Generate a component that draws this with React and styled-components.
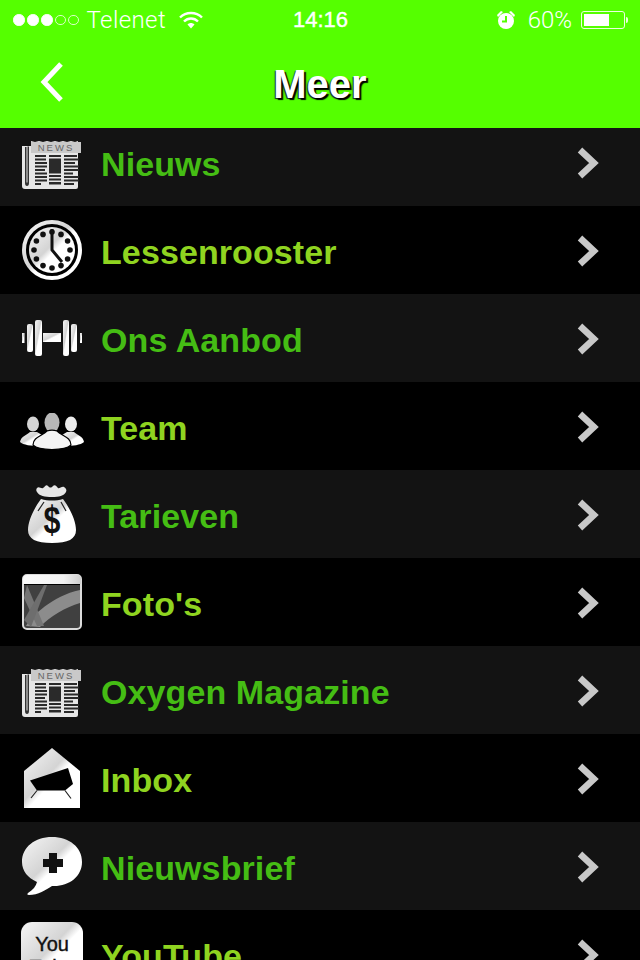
import React from "react";
import styled, { createGlobalStyle } from "styled-components";

const GlobalStyle = createGlobalStyle`
  html, body {
    margin: 0;
    padding: 0;
    background: #000;
    font-family: "Liberation Sans", Arial, sans-serif;
  }
`;

/*** icons ***/
const Gloss = ({ id }) => (
  <defs>
    <linearGradient id={id} x1="0" y1="0" x2="1" y2="1">
      <stop offset="0" stopColor="#f6f6f6" />
      <stop offset="0.44" stopColor="#d4d4d4" />
      <stop offset="0.54" stopColor="#ffffff" />
      <stop offset="1" stopColor="#ffffff" />
    </linearGradient>
  </defs>
);

const NewsIcon = () => (
  <svg width="60" height="48" viewBox="0 0 60 48">
    <path d="M9 0l4 1 4-1 4 1 4-1 4 1 4-1 4 1 4-1 4 1 4-1 4 1 3-1v46a2 2 0 0 1-2 2H3a3 3 0 0 1-3-3V5h9z" fill="#e6e6e6" />
    <path d="M3 6v36q0 3 2 3t2-3V5.500H5.500v36h-1V6z" fill="#333" />
    <path d="M9 1h50v11H9z" fill="#c9c9c9" />
    <text x="34" y="10" textAnchor="middle" fontFamily="Liberation Sans" fontSize="9.500" letterSpacing="2" fill="#666">NEWS</text>
    <g fill="#2a2a2a">
      <path d="M13 14h11v2H13zM13 17.500h11v2H13zM13 21h12v2H13zM13 24.500h12v2H13zM13 28h10v2H13zM13 31.500h12v2H13zM13 35h12v2H13zM13 38.500h12v2H13zM13 42h6v2H13z" />
      <path d="M27 14h12v2H27zM27 17.500h12v15H27zM27 34h12v2H27zM27 37.500h12v2H27zM27 41h12v2.500H27z" />
      <path d="M42 14h13v2H42zM42 17.500h15v2H42zM42 21h11v2H42zM42 24.500h15v2H42zM42 28h15v2H42zM42 31.500h9v2H42zM42 35h15v2H42zM42 38.500h15v2H42zM42 42h10v2H42z" />
    </g>
  </svg>
);

const ClockIcon = ({ id }) => {
  const dots = [0, 1, 2, 3, 4, 5, 6, 7, 8, 9, 10, 11];
  return (
    <svg width="60" height="60" viewBox="0 0 60 60">
      <Gloss id={id} />
      <circle cx="30" cy="30" r="28" fill="none" stroke={`url(#${id})`} strokeWidth="4" />
      <circle cx="30" cy="30" r="23" fill={`url(#${id})`} />
      {dots.map(d => (
        <circle
          key={d}
          cx={30 + 18 * Math.sin((d * Math.PI) / 6)}
          cy={30 - 18 * Math.cos((d * Math.PI) / 6)}
          r="2.800"
          fill="#111"
        />
      ))}
      <path d="M30 9v21l10 12" fill="none" stroke="#111" strokeWidth="3" />
    </svg>
  );
};

const DumbbellIcon = ({ id }) => (
  <svg width="60" height="36" viewBox="0 0 60 36">
    <Gloss id={id} />
    <g fill={`url(#${id})`}>
      <rect x="0" y="13" width="2.500" height="10" />
      <rect x="5" y="4" width="6" height="28" rx="2" />
      <rect x="13" y="0" width="7" height="36" rx="2" />
      <rect x="21" y="13" width="18" height="9" />
      <rect x="41" y="0" width="6" height="36" rx="2" />
      <rect x="49" y="4" width="6" height="28" rx="2" />
      <rect x="58" y="13" width="2" height="10" />
    </g>
  </svg>
);

const TeamIcon = ({ id }) => (
  <svg width="64" height="37" viewBox="0 0 64 37">
    <Gloss id={id} />
    <ellipse cx="13" cy="11" rx="6" ry="7.500" fill="#d4d4d4" />
    <path d="M0 29c1-6 7-7 10-10h7l5 3-4 11c-6 0-15-1-18-4z" fill={`url(#${id})`} />
    <ellipse cx="51" cy="11" rx="6" ry="7.500" fill="#ececec" />
    <path d="M64 29c-1-6-7-7-10-10h-7l-5 3 4 11c6 0 15-1 18-4z" fill={`url(#${id})`} />
    <ellipse cx="32" cy="9.500" rx="7.500" ry="10" fill="#b8b8b8" />
    <path d="M13 32c0-8 9-9 14-14 3-1 7-1 10 0 5 5 14 6 14 14-6 6-32 6-38 0z" fill="#f4f4f4" stroke="#000" strokeWidth="1.200" />
  </svg>
);

const MoneyIcon = ({ id }) => (
  <svg width="50" height="60" viewBox="0 0 50 60">
    <Gloss id={id} />
    <path d="M10 4c2-2 4 1 6 0s3-4 5-2 3 2 5 0 4 1 5 2 4-2 6-1 3 3 2 5c-2 4-7 5-14 5s-13-1-15-5c-1-1-1-3 0-4z" fill="#e6e6e6" />
    <path d="M14 15c7 2 15 2 22 0 6 8 13 21 13 31 0 9-8 13-24 13S1 55 1 46c0-10 7-23 13-31z" fill={`url(#${id})`} />
    <path d="M11 27l6-9M39 27l-5-9" stroke="#222" strokeWidth="1.200" fill="none" />
    <text transform="translate(25 49) scale(0.8 1)" textAnchor="middle" fontFamily="Liberation Sans" fontWeight="700" fontSize="38" fill="#111">$</text>
  </svg>
);

const PhotoIcon = ({ id }) => (
  <svg width="60" height="56" viewBox="0 0 60 56">
    <defs>
      <linearGradient id={id} x1="0" y1="0" x2="1" y2="0">
        <stop offset="0" stopColor="#fafafa" />
        <stop offset="0.7" stopColor="#f2f2f2" />
        <stop offset="1" stopColor="#cfcfcf" />
      </linearGradient>
    </defs>
    <rect x="1" y="1" width="58" height="54" rx="4" fill="#404040" stroke="#dcdcdc" strokeWidth="2" />
    <path d="M1 10V5a4 4 0 0 1 4-4h50a4 4 0 0 1 4 4v5z" fill={`url(#${id})`} />
    <path d="M2 10h56v1H2z" fill="#000" />
    <path d="M4 52c6-10 26-30 54-36v13C44 33 28 42 18 53z" fill="#8c8c8c" />
    <path d="M5 11l17 41h-7L2 24z" fill="#757575" />
    <path d="M2 46L22 11h3L9 53z" fill="#6e6e6e" />
  </svg>
);

const MailIcon = ({ id }) => (
  <svg width="56" height="60" viewBox="0 0 56 60">
    <Gloss id={id} />
    <path d="M28 0l28 23v37H0V23z" fill={`url(#${id})`} />
    <path d="M6 32.500L44 20l5 16-8 6.500H13z" fill="#000" />
    <path d="M13 42.500L7 50M41 42.500l6 8" stroke="#222" strokeWidth="1.200" fill="none" />
  </svg>
);

const BubbleIcon = ({ id }) => (
  <svg width="60" height="58" viewBox="0 0 60 58">
    <Gloss id={id} />
    <path d="M30 0c17 0 30 10 30 25S46 50 30 49c-6 4-14 9-23 9-2 0-2-1-1-2 5-3 8-7 9-11C6 41 0 34 0 25 0 10 13 0 30 0z" fill={`url(#${id})`} />
    <path d="M27 16h8v6h6v8h-6v6h-8v-6h-6v-8h6z" fill="#111" />
  </svg>
);

const YouTubeIcon = ({ id }) => (
  <svg width="62" height="64" viewBox="0 0 62 64">
    <Gloss id={id} />
    <rect x="0" y="0" width="62" height="64" rx="11" fill={`url(#${id})`} />
    <text x="31" y="29" textAnchor="middle" fontFamily="Liberation Sans" fontSize="20" stroke="#111" strokeWidth="0.400" fill="#111">You</text>
    <text x="31" y="52" textAnchor="middle" fontFamily="Liberation Sans" fontSize="20" stroke="#111" strokeWidth="0.400" fill="#111">Tube</text>
  </svg>
);

const Chevron = () => (
  <ChevronSvg width="24" height="32" viewBox="0 0 24 32">
    <path d="M4 3l14 13L4 29" fill="none" stroke="#c8c8c8" strokeWidth="6.500" />
  </ChevronSvg>
);

const BackChevron = () => (
  <svg width="24" height="40" viewBox="0 0 24 40">
    <path d="M21 2L4 20l17 18" fill="none" stroke="#fff" strokeWidth="5" />
  </svg>
);

const WifiIcon = () => (
  <svg width="24" height="18" viewBox="0 0 24 18">
    <g fill="none" stroke="#fff" strokeWidth="2.400">
      <path d="M1 6.500c6-6 16-6 22 0" />
      <path d="M5 10.500c4-4 10-4 14 0" />
    </g>
    <path d="M8.500 13.500c2-2 5-2 7 0L12 17.500z" fill="#fff" />
  </svg>
);

const AlarmIcon = () => (
  <svg width="20" height="20" viewBox="0 0 20 20">
    <path d="M1 5l4-4 2 1-5 5zM19 5l-4-4-2 1 5 5z" fill="#fff" />
    <circle cx="10" cy="11" r="8" fill="#fff" />
    <path d="M10 6v5.500H6" fill="none" stroke="#55ff00" strokeWidth="2" />
  </svg>
);

/*** data ***/
const items = [
  { label: "Nieuws", Icon: NewsIcon, shift: 5 },
  { label: "Lessenrooster", Icon: ClockIcon, shift: 0 },
  { label: "Ons Aanbod", Icon: DumbbellIcon, shift: 0 },
  { label: "Team", Icon: TeamIcon, shift: 10 },
  { label: "Tarieven", Icon: MoneyIcon, shift: 0 },
  { label: "Foto's", Icon: PhotoIcon, shift: 0 },
  { label: "Oxygen Magazine", Icon: NewsIcon, shift: 5 },
  { label: "Inbox", Icon: MailIcon, shift: 0 },
  { label: "Nieuwsbrief", Icon: BubbleIcon, shift: 0 },
  { label: "YouTube", Icon: YouTubeIcon, shift: 0 }
];

export default function App() {
  return (
    <Page>
      <GlobalStyle />
      <Header>
        <StatusBar>
          <StatusLeft>
            <Signal>
              {[1, 1, 1, 0, 0].map((on, i) => (
                <SignalDot key={i} $on={on} />
              ))}
            </Signal>
            <Carrier>Telenet</Carrier>
            <WifiIcon />
          </StatusLeft>
          <StatusTime>14:16</StatusTime>
          <StatusRight>
            <AlarmIcon />
            <BatteryText>60%</BatteryText>
            <Battery>
              <BatteryLevel />
            </Battery>
            <BatteryCap />
          </StatusRight>
        </StatusBar>
        <NavBar>
          <BackButton>
            <BackChevron />
          </BackButton>
          <Title>Meer</Title>
        </NavBar>
      </Header>
      <List>
        {items.map(({ label, Icon, shift }, i) => (
          <Row key={label + i} $odd={i % 2 === 0}>
            <IconCell $shift={shift}>
              <Icon id={`gloss-${i}`} />
            </IconCell>
            <Label $odd={i % 2 === 0}>{label}</Label>
            <Chevron />
          </Row>
        ))}
      </List>
    </Page>
  );
}

const Page = styled.div`
  width: 640px;
  height: 960px;
  overflow: hidden;
  display: flex;
  flex-direction: column;
  background: #000;
`;

const Header = styled.header`
  flex: none;
  height: 128px;
  background: #55ff00;
  position: relative;
  z-index: 1;
`;

const StatusBar = styled.div`
  height: 40px;
  padding: 0 12px 0 13px;
  display: grid;
  grid-template-columns: 1fr auto 1fr;
  align-items: center;
  color: #fff;
`;

const StatusLeft = styled.div`
  display: flex;
  align-items: center;
`;

const StatusRight = styled.div`
  display: flex;
  align-items: center;
  justify-content: flex-end;
`;

const Signal = styled.div`
  display: flex;
  align-items: center;
  gap: 2.5px;
`;

const SignalDot = styled.span`
  width: ${props => (props.$on ? "11.5px" : "10.5px")};
  height: ${props => (props.$on ? "11.5px" : "10.5px")};
  box-sizing: border-box;
  border-radius: 50%;
  border: 1px solid ${props => (props.$on ? "#fff" : "#d8ffc4")};
  background: ${props => (props.$on ? "#fff" : "transparent")};
`;

const Carrier = styled.span`
  font-family: Roboto, "Liberation Sans", sans-serif;
  font-size: 24px;
  font-weight: 300;
  letter-spacing: 0.4px;
  margin: 0 13px 0 8px;
`;

const BatteryText = styled.span`
  font-family: Roboto, "Liberation Sans", sans-serif;
  font-size: 24px;
  font-weight: 300;
  margin: 0 9px 0 12px;
`;

const StatusTime = styled.span`
  font-size: 22px;
  font-weight: 400;
  -webkit-text-stroke: 0.4px #fff;
`;

const Battery = styled.div`
  width: 44px;
  height: 18px;
  box-sizing: border-box;
  border: 1px solid #eaffdf;
  border-radius: 3px;
  padding: 2px;
`;

const BatteryLevel = styled.div`
  width: 65%;
  height: 100%;
  background: #fff;
`;

const BatteryCap = styled.div`
  width: 2px;
  height: 6px;
  margin-left: 1px;
  background: #eaffdf;
  border-radius: 0 2px 2px 0;
`;

const NavBar = styled.nav`
  height: 88px;
  display: flex;
  align-items: center;
  justify-content: center;
  position: relative;
`;

const BackButton = styled.div`
  position: absolute;
  left: 40px;
  top: 22px;
  display: flex;
`;

const Title = styled.h1`
  margin: 0;
  font-size: 40px;
  font-weight: 700;
  color: #fff;
  text-shadow: 2px 2px 1px #000, -1px 1px 1px #222;
`;

const List = styled.div`
  margin-top: -10px;
  display: flex;
  flex-direction: column;
`;

const Row = styled.div`
  flex: none;
  height: 88px;
  display: flex;
  align-items: center;
  padding: 0 40px 0 18px;
  background: ${props => (props.$odd ? "#131313" : "#000")};
`;

const IconCell = styled.div`
  flex: none;
  width: 68px;
  margin-right: 15px;
  padding-top: ${props => props.$shift}px;
  display: flex;
  justify-content: center;
`;

const Label = styled.span`
  flex: 1;
  padding-top: 4px;
  font-size: 34px;
  font-weight: 700;
  letter-spacing: 0.1px;
  color: ${props => (props.$odd ? "#45bd14" : "#8fd420")};
`;

const ChevronSvg = styled.svg`
  margin-top: 2px;
`;
